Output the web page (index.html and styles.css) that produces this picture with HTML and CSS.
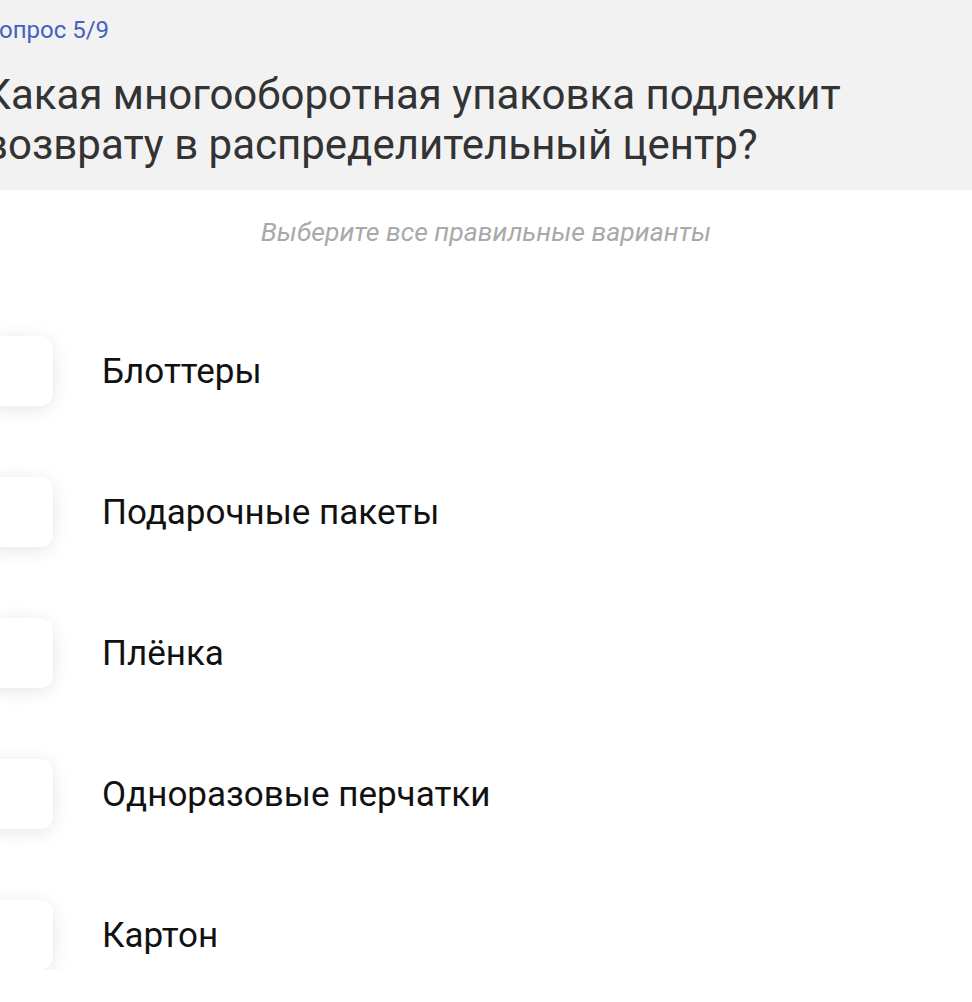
FILE: index.html
```html
<!DOCTYPE html>
<html lang="ru">
<head>
    <meta charset="UTF-8">
    <meta name="viewport" content="width=device-width, initial-scale=1.0">
    <title>Вопрос 5/9</title>
    <link rel="stylesheet" href="styles.css">
</head>
<body class="page">
    <div class="q-head">
        <p class="q-num">Вопрос 5/9</p>
        <p class="q-title">Какая многооборотная упаковка подлежит возврату в распределительный центр?</p>
    </div>

    <p class="hint">Выберите все правильные варианты</p>

    <div class="answers">
        <label class="answer">
            <span class="box"></span>
            <span class="answer-text">Блоттеры</span>
        </label>
        <label class="answer">
            <span class="box"></span>
            <span class="answer-text">Подарочные пакеты</span>
        </label>
        <label class="answer">
            <span class="box"></span>
            <span class="answer-text">Плёнка</span>
        </label>
        <label class="answer">
            <span class="box"></span>
            <span class="answer-text">Одноразовые перчатки</span>
        </label>
        <label class="answer">
            <span class="box"></span>
            <span class="answer-text">Картон</span>
        </label>
    </div>
</body>
</html>
```

FILE: styles.css
```css
.page {
    margin: 0;
    background-color: white;
    font-family: Roboto, "Noto Sans", sans-serif;
}

.q-head {
    background-color: #f2f2f2;
    height: 190px;
    box-sizing: border-box;
    padding: 14px 0 0 0;
    margin-left: -16px;
}

.q-num {
    margin: 0;
    font-size: 24px;
    line-height: 32px;
    color: #4561c0;
}

.q-title {
    margin: 24px 0 0 0;
    width: 920px;
    font-size: 42px;
    line-height: 50px;
    color: #333333;
}

.hint {
    margin: 26px 0 0 0;
    text-align: center;
    font-size: 26.6px;
    font-style: italic;
    color: #a9a9a9;
}

.answers {
    margin-top: 89px;
    margin-left: -17px;
    display: flex;
    flex-direction: column;
    gap: 71px;
}

.answer {
    display: flex;
    align-items: center;
    gap: 49px;
}

.box {
    width: 70px;
    height: 70px;
    border-radius: 13px;
    background-color: white;
    box-shadow: 0 3px 18px rgba(0, 0, 0, 0.1);
    flex-shrink: 0;
}

.answer-text {
    font-size: 35px;
    color: #111111;
}
```
